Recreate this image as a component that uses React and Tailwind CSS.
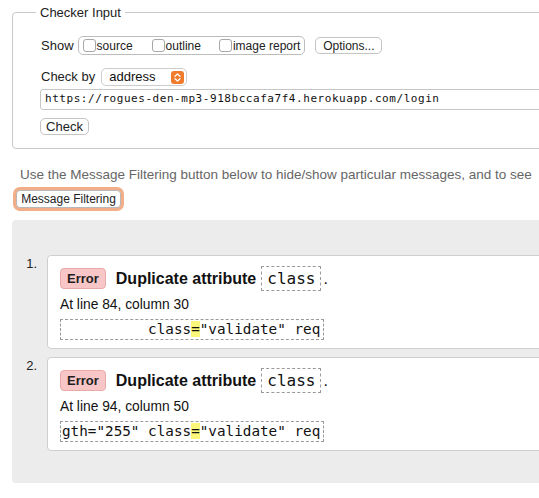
import React from "react";

const sans = { fontFamily: '"Liberation Sans", Arial, sans-serif' };

function Box({ label, gap }) {
  return (
    <span className={`flex items-center ${gap}`}>
      <span className="w-[13px] h-[13px] border border-[#a8a8a8] rounded-[3px] bg-white" />
      <span className="ml-[1px] text-[12px] text-[#222]">{label}</span>
    </span>
  );
}

function Message({ n, line, col, pre }) {
  return (
    <li className="flex">
      <div className="w-[35px] shrink-0 text-right pr-[10px] text-[13px] leading-[16px] text-[#222] mt-[1px]">
        {n}.
      </div>
      <div className="flex-1 bg-white border border-[#cfcfcf] rounded-[4px] pl-[12px] pt-[9px] pb-[8px]">
        <div className="flex items-center h-[27px]">
          <span className="h-[21px] px-[6px] flex items-center bg-[#f8c6c6] border border-[#e8a9a9] rounded-[4px] text-[13px] font-bold text-[#1e1e1e]">
            Error
          </span>
          <span className="ml-[10px] text-[16px] font-bold text-[#111]">Duplicate attribute</span>
          <code className="ml-[5px] h-[25px] px-[5px] flex items-center border border-dashed border-[#9a9a9a] text-[16px] text-[#111] font-['DejaVu_Sans_Mono',monospace]">
            class
          </code>
          <span className="ml-[2px] text-[16px] text-[#111]">.</span>
        </div>
        <div className="mt-[5px] text-[13.8px] leading-[16px] text-[#111]">
          At line {line}, column {col}
        </div>
        <div className="mt-[6px] w-[264px] h-[21px] leading-[19px] px-[1px] border border-dashed border-[#9a9a9a] text-[14.3px] text-[#111] whitespace-pre font-['DejaVu_Sans_Mono',monospace]">
          {pre + "class"}<mark className="bg-[#fbf779] text-[#111]">=</mark>"validate" req
        </div>
      </div>
    </li>
  );
}

export default function App() {
  return (
    <div className="w-[539px] h-[498px] overflow-hidden bg-white" style={sans}>
      <div className="w-[620px]">
        <fieldset className="ml-[12px] mt-[5px] border border-[#c9c9c9] rounded-[4px] pl-[28px] pb-[13px]">
          <legend className="-ml-[5px] px-[4px] text-[13px] leading-[15px] text-[#222]">Checker Input</legend>

          <div className="mt-[16px] flex items-center h-[19px]">
            <span className="text-[13px] text-[#222]">Show</span>
            <div className="ml-[4px] h-[19px] flex items-center border border-[#bdbdbd] rounded-[5px] pl-[4px] pr-[4px]">
              <Box label="source" gap="" />
              <Box label="outline" gap="ml-[19px]" />
              <Box label="image report" gap="ml-[18px]" />
            </div>
            <button className="ml-[10px] h-[17px] w-[67px] border border-[#c4c4c4] rounded-[5px] bg-white text-[12px] text-[#222] leading-none">
              Options...
            </button>
          </div>

          <div className="mt-[13px] flex items-center h-[18px]">
            <span className="text-[13px] text-[#222]">Check by</span>
            <div className="ml-[6px] w-[86px] h-[18px] flex items-center justify-between border border-[#cdcdcd] rounded-[5px] pl-[7px] pr-[2px] bg-white">
              <span className="text-[13px] text-[#111]">address</span>
              <span className="w-[13px] h-[13px] bg-[#f07b2c] rounded-[3px] flex items-center justify-center">
                <svg width="7" height="9" viewBox="0 0 7 9" fill="none" stroke="white" strokeWidth="1.3" strokeLinecap="round" strokeLinejoin="round">
                  <path d="M1 3.3 L3.5 1 L6 3.3" />
                  <path d="M1 5.7 L3.5 8 L6 5.7" />
                </svg>
              </span>
            </div>
          </div>

          <div className="mt-[3px] -ml-[1px] h-[21px] flex items-center border border-[#c6c6c6] rounded-[3px] pl-[4px] text-[11px] tracking-[0.55px] text-[#111] font-['DejaVu_Sans_Mono',monospace]">
            https://rogues-den-mp3-918bccafa7f4.herokuapp.com/login
          </div>

          <button className="block mt-[8px] -ml-[1px] h-[17px] w-[49px] border border-[#c4c4c4] rounded-[5px] bg-white text-[13px] text-[#222] leading-none">
            Check
          </button>
        </fieldset>

        <p className="mt-[18px] ml-[20px] whitespace-nowrap text-[13.5px] leading-[16px] text-[#666]">
          Use the Message Filtering button below to hide/show particular messages, and to see
        </p>

        <button className="block mt-[7px] ml-[16px] h-[18px] w-[105px] border border-[#b8b8b8] rounded-[4px] bg-white text-[12px] text-[#222] leading-none ring-[3px] ring-[#f2ae88]">
          Message Filtering
        </button>

        <div className="mt-[12px] ml-[12px] h-[263px] bg-[#ececec] rounded-[4px] pt-[35px]">
          <ol className="flex flex-col gap-[8px]">
            <Message n={1} line={84} col={30} pre={"          "} />
            <Message n={2} line={94} col={50} pre={'gth="255" '} />
          </ol>
        </div>
      </div>
    </div>
  );
}
